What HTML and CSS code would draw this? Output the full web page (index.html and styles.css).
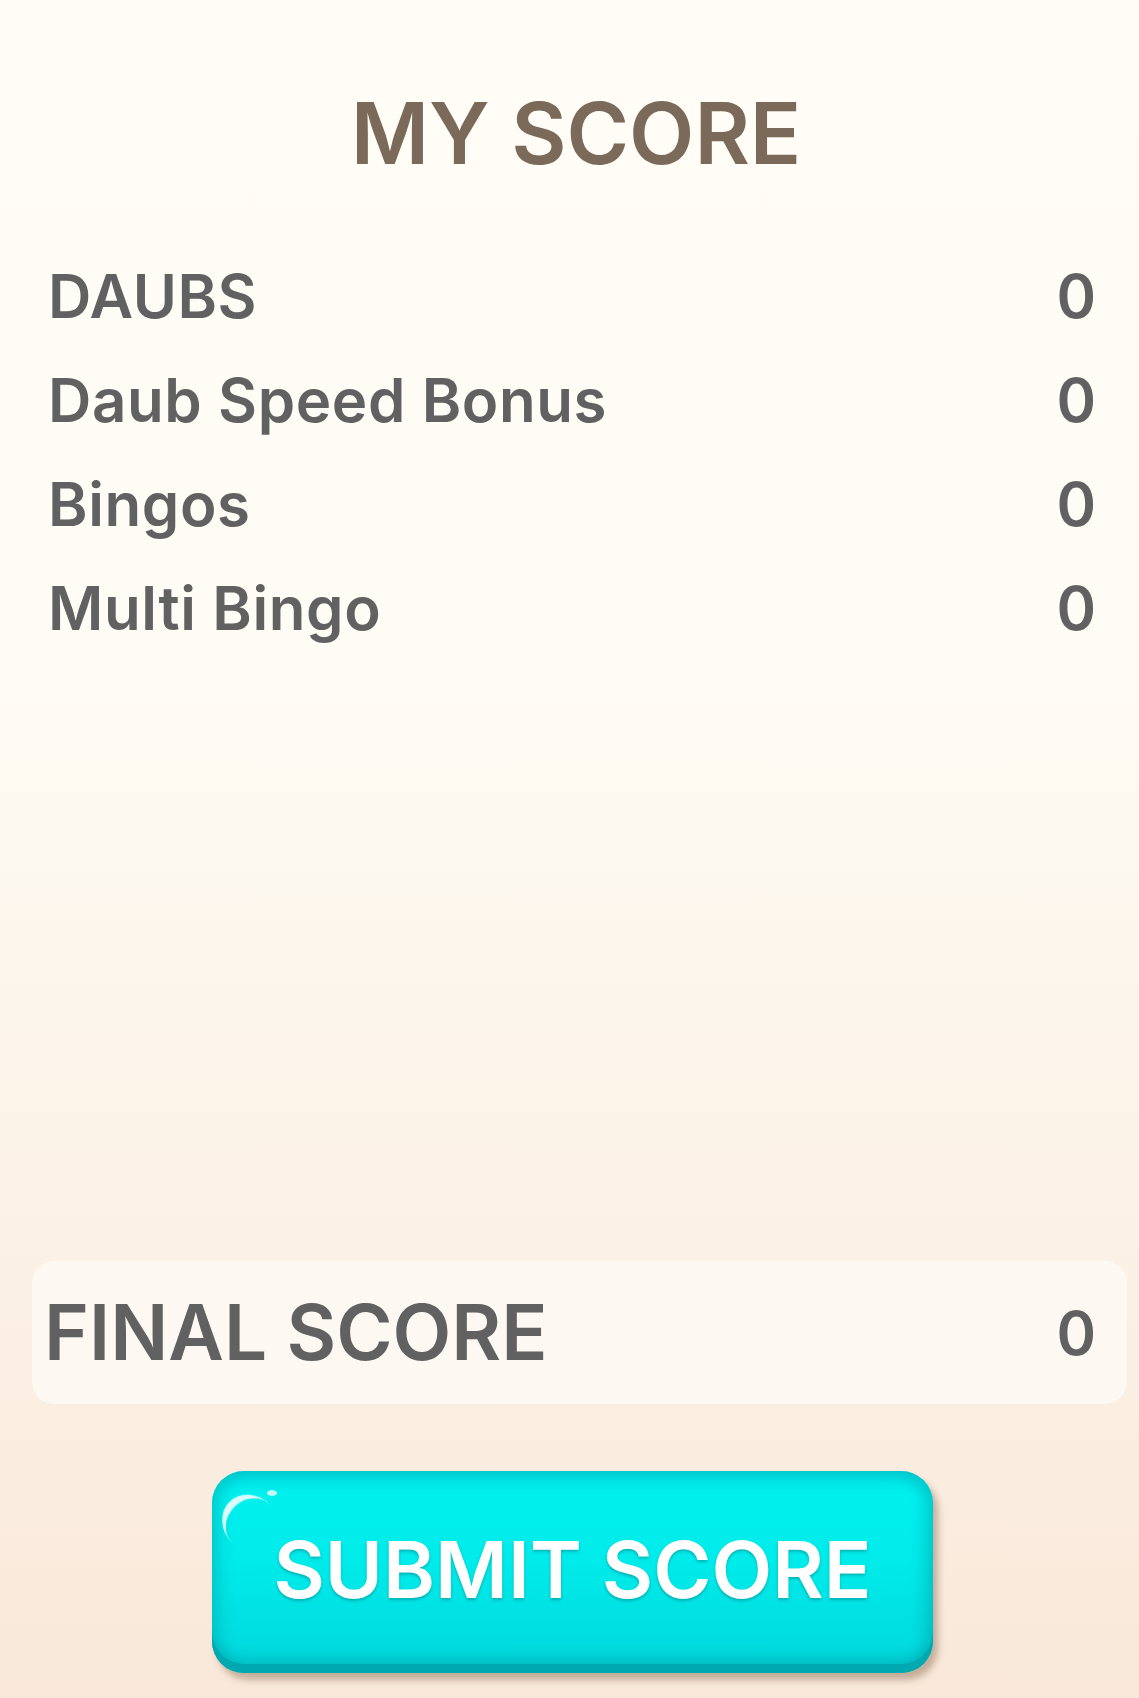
FILE: index.html
```html
<!DOCTYPE html>
<html lang="en">
<head>
<meta charset="utf-8">
<title>My Score</title>
<link rel="stylesheet" href="styles.css">
</head>
<body>
<main class="screen">
  <h1 class="title">MY SCORE</h1>
  <ul class="rows">
    <li class="row"><span class="label">DAUBS</span><span class="value">0</span></li>
    <li class="row"><span class="label">Daub Speed Bonus</span><span class="value">0</span></li>
    <li class="row"><span class="label">Bingos</span><span class="value">0</span></li>
    <li class="row"><span class="label">Multi Bingo</span><span class="value">0</span></li>
  </ul>
  <section class="final">
    <span class="final-label">FINAL SCORE</span>
    <span class="final-value">0</span>
  </section>
  <button class="submit" type="button">SUBMIT SCORE</button>
</main>
</body>
</html>
```
FILE: styles.css
```css
* { box-sizing: border-box; }

html, body {
  margin: 0;
  padding: 0;
}

body {
  width: 1139px;
  height: 1698px;
  overflow: hidden;
  font-family: "Inter", "Lato", "Liberation Sans", sans-serif;
  font-variant-ligatures: none;
  background: linear-gradient(180deg, #fffdf6 0%, #fefcf5 40%, #fcf4ea 62%, #fbefe3 80%, #f9e8d9 100%);
}

.screen {
  height: 1698px;
  display: flex;
  flex-direction: column;
  padding-bottom: 25px;
}

.title {
  margin: 91px 0 0 0;
  padding-left: 13px;
  font-size: 85px;
  line-height: 1;
  font-weight: 600;
  text-align: center;
  color: #7b6a59;
}

.rows {
  list-style: none;
  margin: 68px 0 0 0;
  padding: 0 43px 0 48px;
}

.row {
  display: flex;
  justify-content: space-between;
  align-items: baseline;
  height: 104px;
  line-height: 104px;
  font-size: 60px;
  font-weight: 600;
  color: #616161;
}

.label {
  letter-spacing: 0.6px;
}

.final {
  margin: auto 12px 0 32px;
  height: 143px;
  border-radius: 22px;
  background: #fdf8f1;
  display: flex;
  justify-content: space-between;
  align-items: center;
  padding: 0 31px 0 12px;
  color: #616161;
  font-weight: 600;
  line-height: 1;
}

.final-label {
  font-size: 76.5px;
}

.final-value {
  font-size: 60px;
}

.submit {
  position: relative;
  margin: 67px 0 0 212px;
  width: 721px;
  height: 202px;
  border: none;
  border-radius: 32px;
  padding: 0 0 6px 0;
  font-family: inherit;
  font-size: 79px;
  font-weight: 600;
  line-height: 1;
  color: #ffffff;
  text-shadow: 0 2px 3px rgba(0, 110, 120, 0.45);
  background: linear-gradient(180deg, #00e4e6 0%, #00f0ee 12%, #00ebea 45%, #00dcdf 85%, #00d2d6 100%);
  box-shadow:
    inset 0 -9px 0 #00a9af,
    inset 0 -16px 10px rgba(0, 140, 150, 0.25),
    inset 12px 0 12px rgba(0, 150, 160, 0.2),
    inset -12px 0 12px rgba(0, 150, 160, 0.24),
    inset 0 10px 10px rgba(0, 170, 180, 0.18),
    5px 7px 7px rgba(130, 100, 75, 0.45);
}

.submit::before {
  content: "";
  position: absolute;
  left: 12px;
  top: 22px;
  width: 54px;
  height: 54px;
  border-top: 7px solid rgba(255, 255, 255, 0.85);
  border-radius: 50%;
  transform: rotate(-45deg);
  filter: blur(0.7px);
}

.submit::after {
  content: "";
  position: absolute;
  left: 55px;
  top: 19px;
  width: 10px;
  height: 6px;
  border-radius: 50%;
  background: rgba(255, 255, 255, 0.75);
  filter: blur(0.6px);
}
```
